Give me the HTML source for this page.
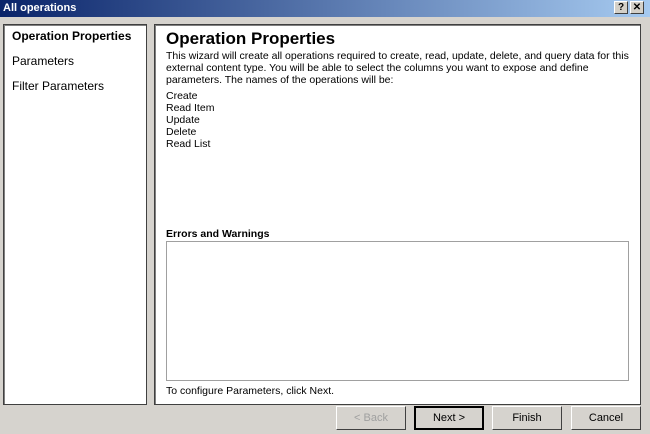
<!DOCTYPE html>
<html><head><style>
body{margin:0;width:650px;height:434px;background:#d6d3ce;font-family:"Liberation Sans",sans-serif;position:relative;overflow:hidden;font-size:10.5px;color:#000}
.t{position:absolute;left:0;top:0;width:650px;height:17px;background:linear-gradient(90deg,#0a246a,#a6caf0);color:#fff;font-weight:bold;font-size:11px;line-height:16px;padding-left:3px;box-sizing:border-box}
.tb{position:absolute;top:1px;width:14px;height:13px;background:#d4d0c8;border:1px solid;border-color:#fff #404040 #404040 #fff;box-sizing:border-box;color:#000;font-size:10px;font-weight:bold;text-align:center;line-height:11px}
.p{position:absolute;background:#fff;border:1px solid #404040;box-shadow:inset 1px 1px 0 #808080;box-sizing:border-box}
.a{position:absolute;white-space:nowrap}
.btn{position:absolute;top:406px;height:24px;width:70px;background:#d6d3ce;border:1px solid;border-color:#fff #404040 #404040 #fff;box-sizing:border-box;text-align:center;line-height:22px;font-size:11px}
</style></head><body>
<div class="t">All operations</div>
<div class="tb" style="left:614px">?</div><div class="tb" style="left:630px">✕</div>
<div class="p" style="left:3px;top:24px;width:144px;height:381px"></div>
<div class="a" style="left:12px;top:29px;font-weight:bold;font-size:12px">Operation Properties</div>
<div class="a" style="left:12px;top:54px;font-size:12px">Parameters</div>
<div class="a" style="left:12px;top:79px;font-size:12px">Filter Parameters</div>
<div class="p" style="left:154px;top:24px;width:487px;height:381px"></div>
<div class="a" style="left:166px;top:29px;font-weight:bold;font-size:17px">Operation Properties</div>
<div class="a" style="left:166px;top:50px;line-height:12px">This wizard will create all operations required to create, read, update, delete, and query data for this<br>external content type. You will be able to select the columns you want to expose and define<br>parameters. The names of the operations will be:</div>
<div class="a" style="left:166px;top:90px;line-height:12px">Create<br>Read Item<br>Update<br>Delete<br>Read List</div>
<div class="a" style="left:166px;top:228px;font-weight:bold">Errors and Warnings</div>
<div style="position:absolute;left:166px;top:241px;width:463px;height:140px;border:1px solid #a0a0a0;box-sizing:border-box;background:#fff"></div>
<div class="a" style="left:166px;top:385px">To configure Parameters, click Next.</div>
<div class="btn" style="left:336px;color:#a0a0a0">&lt; Back</div>
<div class="btn" style="left:414px;border:2px solid #000;line-height:20px">Next &gt;</div>
<div class="btn" style="left:492px">Finish</div>
<div class="btn" style="left:571px">Cancel</div>
</body></html>
